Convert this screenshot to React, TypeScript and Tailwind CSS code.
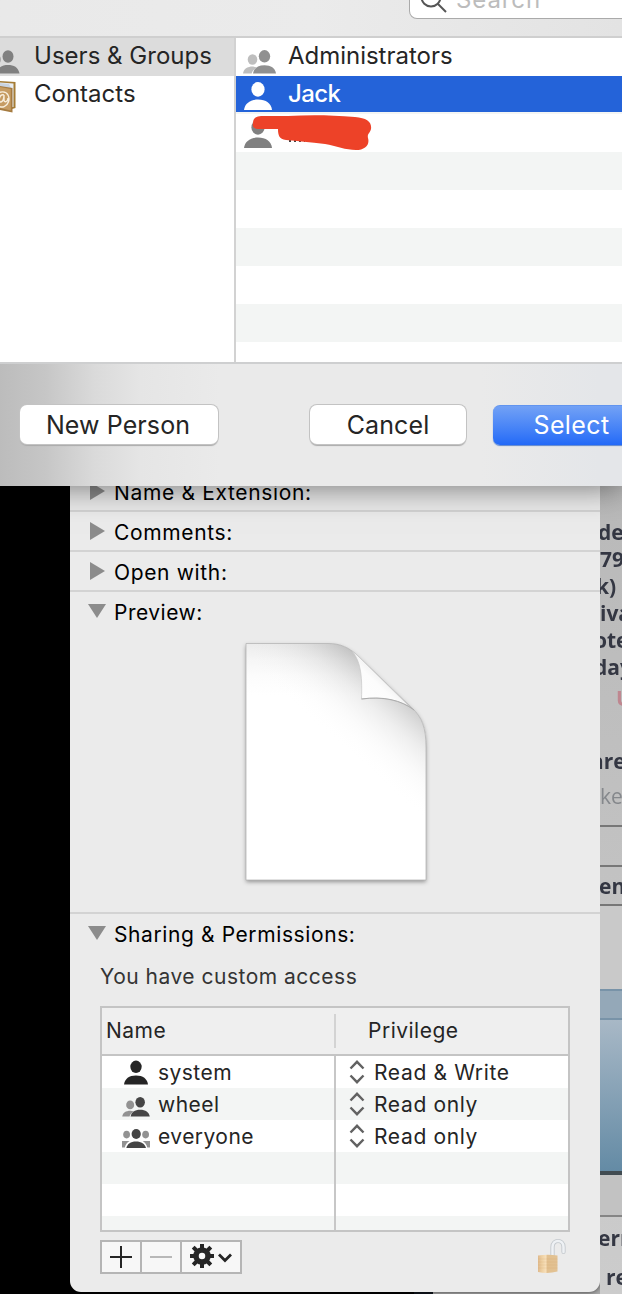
import type { ReactNode } from "react";

function Person({ className }: { className: string }) {
  return (
    <svg viewBox="0 0 28 28" className={className} fill="currentColor">
      <ellipse cx="14" cy="7.4" rx="6.6" ry="7.3" />
      <path d="M0 28C.8 21.500 6 17.600 14 17.600S27.200 21.500 28 28Z" />
    </svg>
  );
}

function PairIcon({ className, back, front }: { className: string; back: string; front: string }) {
  return (
    <svg viewBox="0 0 33 24" className={className}>
      <g fill={back}>
        <ellipse cx="9.500" cy="9.500" rx="4.800" ry="5.200" />
        <path d="M0 23.500C.7 19 4 16.500 10 16.500L14 17.500C11 19 9.500 21 8.700 23.500Z" />
      </g>
      <g fill={front}>
        <ellipse cx="21.500" cy="6.300" rx="5.700" ry="6.200" />
        <path d="M10 23.500C11 18 15 15.300 21.500 15.300S32 18 33 23.500Z" />
      </g>
    </svg>
  );
}

function TrioIcon() {
  return (
    <svg viewBox="0 0 28 20" className="h-5 w-7">
      <g fill="#929292">
        <ellipse cx="4.600" cy="5.600" rx="3.400" ry="3.800" />
        <ellipse cx="23.600" cy="5.600" rx="3.400" ry="3.800" />
        <path d="M0 12H7.500C5 13.500 3.500 15.500 2.800 18.500H0ZM28 12H20.700C23 13.500 24.700 15.500 25.300 18.500H28Z" />
      </g>
      <ellipse cx="14.200" cy="5" rx="4.600" ry="5" fill="#454545" />
      <path d="M4.300 19C5.500 15 8.500 12.600 14 12.600S22.700 15 24 19Z" fill="#454545" />
    </svg>
  );
}

function ContactsIcon() {
  return (
    <svg viewBox="0 0 16 34" className="h-[34px] w-4 shrink-0">
      <path d="M0 2L15.500 3V29L12 30 0 29Z" fill="#a57c35" />
      <path d="M0 3.500L13.500 4.500V28H0Z" fill="#e8edf2" />
      <path d="M0 4L9 5 11 9H0Z" fill="#c9d3df" />
      <path d="M0 7L12.500 9V33.500L0 31Z" fill="#a57b40" />
      <path d="M0 8L10.800 10V31.500L0 29Z" fill="#c69c63" />
      <path d="M-5 21a7 8 0 1 0 13-5C6 12 0 12-3 15M4 16C-1 14-2 24 1 23 4 22 4 16 4 16V21C4 24 8 23 8 19" fill="none" stroke="#f7eedc" strokeWidth="1.400" />
    </svg>
  );
}

function Arrow({ open = false }: { open?: boolean }) {
  return (
    <span className={open ? "flex w-11 shrink-0 pl-[18px]" : "flex w-11 shrink-0 pl-5"}>
      {open ? (
        <svg viewBox="0 0 18 14" className="mb-1 h-3.5 w-[18px]"><path d="M0 0H18L9 14Z" fill="#8c8c8c" /></svg>
      ) : (
        <svg viewBox="0 0 15 18" className="mb-[5px] h-[18px] w-[15px]"><path d="M0 0L15 9 0 18Z" fill="#8c8c8c" /></svg>
      )}
    </span>
  );
}

function Section({ children }: { children: ReactNode }) {
  return (
    <div className="flex h-10 shrink-0 items-center border-b-2 border-[#d3d3d3] pt-1">
      <Arrow />
      <span className="text-[21px] tracking-[0.65px] whitespace-nowrap">{children}</span>
    </div>
  );
}

function Stepper() {
  return (
    <svg viewBox="0 0 16 24" className="h-6 w-4" fill="none" stroke="#626262" strokeWidth="2.400">
      <path d="M1.500 8.500L8 1.800 14.500 8.500M1.500 15.500L8 22.200 14.500 15.500" />
    </svg>
  );
}

function DocumentPreview() {
  return (
    <svg viewBox="0 0 200 256" className="h-64 w-[200px]">
      <defs>
        <linearGradient id="sheet" x1="0" y1="0" x2="0" y2="1">
          <stop offset="0" stopColor="#ececec" />
          <stop offset=".07" stopColor="#f6f6f6" />
          <stop offset=".14" stopColor="#fcfcfc" />
          <stop offset=".22" stopColor="#fff" />
        </linearGradient>
        <linearGradient id="foldShade" gradientUnits="userSpaceOnUse" x1="149" y1="47" x2="97" y2="106">
          <stop offset="0" stopColor="#999" stopOpacity=".5" />
          <stop offset=".35" stopColor="#bbb" stopOpacity=".25" />
          <stop offset=".65" stopColor="#ddd" stopOpacity=".12" />
          <stop offset="1" stopColor="#fff" stopOpacity="0" />
        </linearGradient>
        <linearGradient id="flap" x1="0" y1="1" x2=".7" y2=".3">
          <stop offset="0" stopColor="#fff" />
          <stop offset=".6" stopColor="#fcfcfc" />
          <stop offset="1" stopColor="#e3e3e3" />
        </linearGradient>
        <filter id="drop" x="-10%" y="-10%" width="120%" height="120%">
          <feDropShadow dx="0" dy="2" stdDeviation="2" floodColor="#000" floodOpacity=".38" />
        </filter>
      </defs>
      <path d="M10 9.500H92C105 9.500 113 14 121 21L176 74C186 83 190 94 190 113V246H10Z" fill="url(#sheet)" filter="url(#drop)" />
      <path d="M10 9.500H92C105 9.500 113 14 121 21L176 74C186 83 190 94 190 113V246H10Z" fill="url(#foldShade)" stroke="#b5b5b5" strokeWidth=".8" />
      <path d="M116 17C124 27 126.500 39 125.500 65C145 63 160 65 174 73L121 21Z" fill="url(#flap)" stroke="#c5c5c5" strokeWidth=".7" />
      <path d="M125.500 65C147 62 165 66 178 76" fill="none" stroke="#aaa" strokeWidth="1" />
    </svg>
  );
}

function Lock() {
  return (
    <svg viewBox="0 0 30 36" className="h-9 w-[30px]">
      <defs>
        <linearGradient id="brass">
          <stop offset="0" stopColor="#dfb98c" />
          <stop offset=".2" stopColor="#eed0a2" />
          <stop offset=".4" stopColor="#f7dfba" />
          <stop offset=".48" stopColor="#e2c08f" />
          <stop offset="1" stopColor="#e2c294" />
        </linearGradient>
      </defs>
      <path d="M15.500 18V9C15.500 1 26.500 1 26.500 9V14" fill="none" stroke="#c2c7cc" strokeWidth="4.200" strokeLinecap="round" />
      <path d="M15.500 18V9C15.500 1 26.500 1 26.500 9V14" fill="none" stroke="#eef1f4" strokeWidth="2.500" strokeLinecap="round" />
      <path d="M1 17.500Q11 16 20.500 17.500V33.500Q11 36 1 34Z" fill="url(#brass)" />
      <path d="M1 21H20.500M1 24H20.500M1 27H20.500M1 30H20.500" stroke="#c8985c" strokeWidth=".5" opacity=".35" />
    </svg>
  );
}

function Dialog() {
  return (
    <section className="relative z-10 flex h-[486px] shrink-0 flex-col bg-[#eaeaea] text-2xl text-[#252525] shadow-[0_0_32px_rgba(0,0,0,0.55)]">
      <div className="flex h-[38px] shrink-0 justify-end border-b-2 border-[#cfcfcf] bg-linear-to-r from-[#e9e9e9] via-[#ebebeb] to-[#e3e3e3]">
        <div className="-mr-2 flex h-[19px] w-[221px] items-end overflow-hidden rounded-b-lg border border-t-0 border-[#aaa] bg-white pl-2.5">
          <svg viewBox="0 0 28 28" className="mb-1 h-7 w-7 shrink-0" fill="none" stroke="#555" strokeWidth="2"><circle cx="11" cy="11" r="9.500" /><path d="M18 18L26 26" /></svg>
          <span className="mb-[3px] ml-2 text-2xl leading-[30px] tracking-[0.9px] text-[#bcbcbc]">Search</span>
        </div>
      </div>
      <div className="flex h-[326px] shrink-0 border-b-2 border-[#cecfd0] bg-white">
        <aside className="w-[236px] shrink-0 border-r-2 border-[#d2d2d2]">
          <div className="flex h-[38px] items-center bg-[#dcdcdc]">
            <div className="flex w-[34px] shrink-0 items-end overflow-hidden pt-2.5">
              <svg viewBox="0 0 20 24" className="h-6 w-5" fill="#808080"><circle cx="-3" cy="9.500" r="4" fill="#aaa" /><ellipse cx="8" cy="6.500" rx="5.500" ry="6.200" /><path d="M-4 23.500C-2 17 2 15 8 15S18 17 19.500 23.500Z" /></svg>
            </div>
            <span className="pb-0.5 tracking-[0.02px] whitespace-nowrap">Users &amp; Groups</span>
          </div>
          <div className="flex h-[38px] items-center">
            <div className="w-[34px] shrink-0 pt-0.5"><ContactsIcon /></div>
            <span className="pb-0.5">Contacts</span>
          </div>
        </aside>
        <div className="min-w-0 grow overflow-hidden">
          <div className="flex h-[38px] items-center">
            <div className="w-[52px] shrink-0 pt-2.5 pl-[7px]"><PairIcon className="h-6 w-[33px]" back="#bebebe" front="#909090" /></div>
            <span className="pb-0.5 tracking-[-0.02px]">Administrators</span>
          </div>
          <div className="flex h-[38px] items-center border-b-2 border-[#f3f5f4] bg-[#2463d9] text-white">
            <div className="w-[52px] shrink-0 pt-1 pl-2"><Person className="h-7 w-7" /></div>
            <span className="font-medium tracking-[-0.6px]">Jack</span>
          </div>
          <div className="relative h-[38px] pt-1.5 pl-2 text-[#808080]">
            <Person className="h-7 w-7" />
            <div className="absolute top-[24px] left-[53px] h-1 w-4 bg-[repeating-linear-gradient(90deg,#444_0_2px,transparent_2px_5px)]" />
            <svg viewBox="0 0 120 38" className="absolute top-0 left-4 h-[38px] w-[120px]">
              <path d="M1 9C1 3 5 2 13 2H36C57 1 78 1 103 3C115 4 120 8 119 15C118 19 115 20 116 24C118 31 113 36 104 36C94 36 84 32 73 30C58 28 45 27 34 26C27 25 26 21 26 15H7C2 15 0 13 1 9Z" fill="#ed4228" />
            </svg>
          </div>
          {[0, 1].map((i) => <div key={i}><div className="h-[38px] bg-[#f3f5f4]" /><div className="h-[38px]" /></div>)}
          <div className="h-[38px] bg-[#f3f5f4]" />
        </div>
      </div>
      <div className="flex grow items-start overflow-hidden bg-[linear-gradient(90deg,#bcbcbc_0,#c6c6c6_45px,#dadada_95px,#e5e5e5_140px,#eaeaea_220px,#eaeaea_480px,#e4e6e9_600px)] pt-[41px] pl-5 text-[25px]">
        <button className="h-[39px] w-[198px] shrink-0 rounded-[7px] bg-white pt-0.5 pr-0.5 tracking-[0.1px] shadow-[0_0_0_1px_#c3c3c3,0_2px_1px_#aaa]">New Person</button>
        <button className="ml-[92px] h-[39px] w-[156px] shrink-0 rounded-[7px] bg-white pt-0.5 tracking-[0.1px] shadow-[0_0_0_1px_#c3c3c3,0_2px_1px_#aaa]">Cancel</button>
        <button className="ml-[27px] h-10 w-[157px] shrink-0 rounded-[7px] border-t border-[#6194ef] bg-linear-to-b from-[#72a1f5] to-[#2269f7] pt-px tracking-[0.4px] text-white shadow-[0_1px_1px_#5c86ce]">Select</button>
      </div>
    </section>
  );
}

function Permission({ name, icon, access, striped = false }: { name: string; icon: ReactNode; access: string; striped?: boolean }) {
  return (
    <div className={striped ? "flex h-8 bg-[#f3f5f4]" : "flex h-8 bg-white"}>
      <div className="flex w-[234px] shrink-0 items-center border-r-2 border-[#c7c7c7]">
        <span className="flex w-14 shrink-0 justify-center pl-3">{icon}</span>
        <span className="pt-0.5 tracking-[0.45px]">{name}</span>
      </div>
      <div className="flex items-center pl-[13px]">
        <Stepper />
        <span className="ml-[9px] pt-0.5 tracking-[0.65px] whitespace-nowrap">{access}</span>
      </div>
    </div>
  );
}

function Inspector() {
  return (
    <main className="flex h-[806px] w-[530px] shrink-0 flex-col overflow-hidden rounded-b-[11px] bg-[#ebebeb] text-[21px] text-black shadow-[0_0_5px_rgba(0,0,0,0.65)]">
      <div className="flex h-[26px] shrink-0 flex-col justify-end overflow-hidden"><Section>Name &amp; Extension:</Section></div>
      <Section>Comments:</Section>
      <Section>Open with:</Section>
      <div className="flex h-[322px] shrink-0 flex-col border-b-2 border-[#d3d3d3]">
        <div className="flex h-[38px] items-center pt-1"><Arrow open /><span className="tracking-[0.5px]">Preview:</span></div>
        <div className="flex pt-1 pl-[166px]"><DocumentPreview /></div>
      </div>
      <div className="flex h-10 shrink-0 items-center pt-0.5"><Arrow open /><span className="tracking-[0.6px]">Sharing &amp; Permissions:</span></div>
      <p className="h-[52px] shrink-0 pt-[9px] pl-[30px] leading-7 tracking-[0.5px] text-[#343434]">You have custom access</p>
      <div className="mx-[30px] h-[226px] w-[470px] shrink-0 overflow-hidden border-2 border-[#c4c4c4] text-[#252525]">
        <div className="flex h-12 items-center border-b-2 border-[#c4c4c4] bg-[#efefef]">
          <div className="flex h-[34px] w-[234px] items-center border-r-2 border-[#d3d3d3] pl-1 tracking-[0.5px]">Name</div>
          <div className="pl-8 tracking-[0.5px]">Privilege</div>
        </div>
        <Permission name="system" icon={<Person className="h-[25px] w-6" />} access="Read & Write" />
        <Permission name="wheel" icon={<PairIcon className="mt-1.5 h-5 w-7" back="#929292" front="#454545" />} access="Read only" striped />
        <Permission name="everyone" icon={<span className="mt-1.5"><TrioIcon /></span>} access="Read only" />
        <div className="h-8 bg-[#f3f5f4]"><div className="h-full w-[234px] border-r-2 border-[#c7c7c7]" /></div>
        <div className="h-8 bg-white"><div className="h-full w-[234px] border-r-2 border-[#c7c7c7]" /></div>
        <div className="h-3.5 bg-[#f3f5f4]"><div className="h-full w-[234px] border-r-2 border-[#c7c7c7]" /></div>
      </div>
      <div className="flex justify-between pt-1.5 pr-[33px] pl-[30px]">
        <div className="mt-0.5 flex h-[34px] w-[142px] border-2 border-[#b5b5b5] bg-[#f7f7f7]">
          <button className="flex w-10 items-center justify-center border-r-2 border-[#b5b5b5]" aria-label="Add"><svg viewBox="0 0 22 22" className="h-[22px] w-[22px]"><path d="M11 0V22M0 11H22" stroke="#252525" strokeWidth="2" /></svg></button>
          <button className="flex w-10 items-center justify-center border-r-2 border-[#b5b5b5]" aria-label="Remove"><span className="h-0.5 w-[22px] bg-[#b8b8b8]" /></button>
          <button className="flex grow items-center pb-0.5 pl-2" aria-label="Actions">
            <svg viewBox="-12 -12 24 24" className="h-6 w-6"><circle r="6" fill="none" stroke="#252525" strokeWidth="5.500" /><path d="M0-7V-12M0 7V12M-7 0H-12M7 0H12M-5-5L-8.800-8.800M5-5L8.800-8.800M-5 5L-8.800 8.800M5 5L8.800 8.800" stroke="#252525" strokeWidth="4" /></svg>
            <svg viewBox="0 0 14 10" className="mt-1 ml-1 h-2.5 w-3.5"><path d="M1 1.500L7 7.500 13 1.500" fill="none" stroke="#252525" strokeWidth="2.800" /></svg>
          </button>
        </div>
        <Lock />
      </div>
    </main>
  );
}

function BackgroundEdge() {
  return (
    <div className="flex w-[22px] shrink-0 flex-col overflow-hidden bg-linear-to-b from-[#b9b9b9] to-[#cccccc] font-['Open_Sans','Liberation_Sans',sans-serif] text-[21px] leading-[27px] font-bold text-[#343743]">
      <div className="h-[341px] shrink-0 border-b-2 border-[#777] pt-[33px] whitespace-nowrap blur-[0.6px]">
        <div className="-ml-0.5">de</div>
        <div>79</div>
        <div className="-ml-1">k) :</div>
        <div>iva</div>
        <div className="-ml-1.5">ote</div>
        <div className="-ml-1.5">day</div>
        <div className="pt-1 pl-4 text-[#bf8790]">U</div>
        <div className="mt-9 -ml-[9px]">are</div>
        <div className="mt-2 font-normal text-[#85888c]">ke</div>
      </div>
      <div className="h-10 shrink-0 border-b-2 border-[#777]" />
      <div className="h-[39px] shrink-0 border-b-2 border-[#777] pt-1.5 blur-[0.5px]"><span className="-ml-px">en</span></div>
      <div className="h-[83px] shrink-0 bg-[#c9c9c9]" />
      <div className="h-[31px] shrink-0 border-y-2 border-[#7893a8] bg-[#94a8b8]" />
      <div className="h-[155px] shrink-0 border-b-4 border-[#414b51] bg-linear-to-b from-[#a8b8c6] to-[#648ba5]" />
      <div className="h-[42px] shrink-0 border-b-2 border-[#858585] bg-[#c2c2c2]" />
      <div className="-ml-0.5 pt-2 blur-[0.6px]">err</div>
      <div className="mt-3 pl-1.5 whitespace-nowrap blur-[0.6px]">re</div>
    </div>
  );
}

export default function App() {
  return (
    <div className="flex h-[1294px] w-[622px] flex-col overflow-hidden font-['Inter','Liberation_Sans',sans-serif]">
      <Dialog />
      <div className="flex h-[808px] bg-[linear-gradient(90deg,#000_0_414px,#10151e_414px_433px,#a9a9a9_433px)] pl-[70px]">
        <Inspector />
        <BackgroundEdge />
      </div>
    </div>
  );
}
